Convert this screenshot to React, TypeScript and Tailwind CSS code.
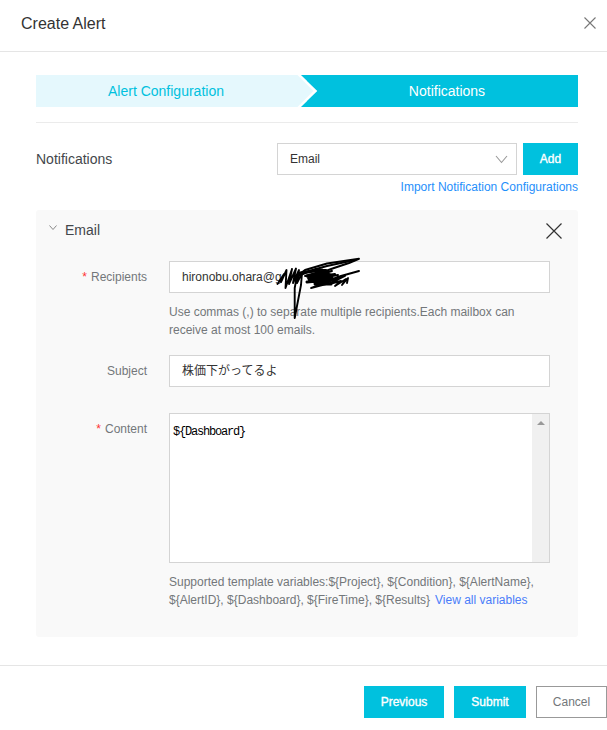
import type { ReactNode } from "react";

function Cross({ size, color, width }: { size: number; color: string; width: number }) {
  return (
    <svg width={size} height={size} viewBox={`0 0 ${size} ${size}`} className="block" stroke={color} strokeWidth={width}>
      <path d={`M0.5 0.5L${size - 0.5} ${size - 0.5}M${size - 0.5} 0.5L0.5 ${size - 0.5}`} />
    </svg>
  );
}

function Steps() {
  return (
    <div className="relative flex h-8 text-sm leading-8">
      <div className="w-[271px] bg-[#e5f8fd] pr-[11px] text-center text-[#00c1de]">Alert Configuration</div>
      <div className="flex-1 bg-[#00c1de] pl-[9px] text-center text-white">Notifications</div>
      <svg className="absolute left-[250px] top-0" width="34" height="32" viewBox="0 0 34 32">
        <path d="M10 0H15L31.500 16L15 32H10Z" fill="#fff" />
        <path d="M15 0H34V32H15L31.500 16Z" fill="#00c1de" />
        <path d="M0 0H11.500L27.500 16L11.500 32H0Z" fill="#e5f8fd" />
      </svg>
    </div>
  );
}

function Field({ label, required, children }: { label: string; required?: boolean; children: ReactNode }) {
  return (
    <div className="flex">
      <div className="w-[111px] shrink-0 text-right text-xs leading-8 text-[#73777a]">
        {required && <span className="mr-1 text-[#ff3333]">*</span>}
        {label}
      </div>
      <div className="ml-[22px] w-[381px]">{children}</div>
    </div>
  );
}

function Scribble() {
  return (
    <svg
      className="absolute left-[105px] top-[-6px]"
      width="90"
      height="66"
      viewBox="0 0 90 66"
      fill="none"
      stroke="#000"
      strokeWidth="1.9"
      strokeLinejoin="round"
      strokeLinecap="round"
    >
      <path d="M2.500 28L9 18L6 26L11.500 14L10.500 32L17 13L14 28L21 12.500L18 27L24 14L22 27L27 17L26 29L19.700 62L19.700 32L22 20L30 14L52 7.500L84 2.800L74 7L59 12L45 17L33 22" />
      <path d="M23 18L52 10L80 4M24 20L40 13L51 14L30 20L57 15L36 21L60 18L34 24L63 19M84 15L66 20L50 26L36 32L55 27L70 20L54 28L66 25L60 30L71 23L67 29L73 22L72 27" />
      <path d="M25 17L47 14L53 17L32 20L55 19L34 23L57 22L32 26L62 23L40 28L56 28" strokeWidth="3" />
    </svg>
  );
}

export default function App() {
  return (
    <div className="flex h-[730px] w-[607px] flex-col overflow-hidden bg-white font-['Liberation_Sans','Noto_Sans_CJK_JP',sans-serif] text-[#333]">
      <header className="flex h-[52px] shrink-0 items-center justify-between border-b border-[#e5e5e5] pb-[5px] pl-[21px] pr-[11px]">
        <h1 className="pt-px text-base leading-6">Create Alert</h1>
        <button aria-label="Close"><Cross size={12} color="#777" width={1.1} /></button>
      </header>

      <main className="h-[613px] shrink-0 pl-9 pr-[29px] pt-[23px]">
        <Steps />
        <div className="mt-[15px] h-px bg-[#ebebeb]" />

        <div className="mt-5 flex h-8 items-center">
          <span className="flex-1 text-sm text-[#43474b]">Notifications</span>
          <div className="flex h-8 w-60 items-center justify-between border border-[#d4d4d4] pl-3 pr-2 text-xs">
            <span>Email</span>
            <svg width="13" height="9" viewBox="0 0 13 9" fill="none" stroke="#999" strokeWidth="1.1">
              <path d="M1 1L6.500 7.500L12 1" />
            </svg>
          </div>
          <button className="ml-1.5 h-8 w-[55px] bg-[#00c1de] text-xs text-white [-webkit-text-stroke:0.35px_white]">Add</button>
        </div>
        <a className="block pt-[3px] text-right text-xs leading-[18px] text-[#1f8ffb]">Import Notification Configurations</a>

        <section className="mt-[14px] h-[427px] rounded-[3px] bg-[#f9f9f9]">
          <div className="flex h-[51px] items-start justify-between pl-[13px] pr-4 pt-[13px]">
            <div className="flex items-start gap-2 text-sm leading-[14px] text-[#43474b]">
              <svg className="mt-0.5" width="8" height="6" viewBox="0 0 8 6" fill="none" stroke="#888">
                <path d="M0.500 0.500L4 4.500L7.500 0.500" />
              </svg>
              <span>Email</span>
            </div>
            <button aria-label="Remove"><Cross size={16} color="#333" width={1.2} /></button>
          </div>

          <Field label="Recipients" required>
            <div className="relative h-8 border border-[#d4d4d4] bg-white pl-3 text-xs leading-[30px]">
              hironobu.ohara@g
              <Scribble />
            </div>
            <p className="mt-[10px] text-xs leading-[18px] text-[#73777a]">
              Use commas (,) to separate multiple recipients.Each mailbox can<br />receive at most 100 emails.
            </p>
          </Field>
          <div className="mt-4">
            <Field label="Subject">
              <div className="h-8 border border-[#d4d4d4] bg-white pl-3 text-xs leading-[30px]">株価下がってるよ</div>
            </Field>
          </div>
          <div className="mt-[26px]">
            <Field label="Content" required>
              <div className="flex h-[150px] justify-between border border-[#d4d4d4] bg-white">
                <span className="pl-[3px] pt-[9px] font-['Liberation_Mono',monospace] text-xs leading-[18px] tracking-[-1.2px] text-black">{"${Dashboard}"}</span>
                <div className="flex w-[17px] justify-center bg-[#f0f0f0] pt-[7px]">
                  <svg width="8" height="4" viewBox="0 0 8 4" fill="#999"><path d="M4 0L8 4H0Z" /></svg>
                </div>
              </div>
              <p className="mt-[10px] whitespace-nowrap text-xs leading-[18px] text-[#73777a]">
                {"Supported template variables:${Project}, ${Condition}, ${AlertName},"}<br />
                {"${AlertID}, ${Dashboard}, ${FireTime}, ${Results}"}
                <a className="ml-[5px] text-[#4a7dfa]">View all variables</a>
              </p>
            </Field>
          </div>
        </section>
      </main>

      <footer className="flex h-[65px] shrink-0 justify-end gap-[10px] border-t border-[#e5e5e5] pt-5 text-xs">
        <button className="h-8 w-20 bg-[#00c1de] text-white [-webkit-text-stroke:0.35px_white]">Previous</button>
        <button className="h-8 w-[72px] bg-[#00c1de] text-white [-webkit-text-stroke:0.35px_white]">Submit</button>
        <button className="h-8 w-[71px] border border-[#999] text-[#73777a]">Cancel</button>
      </footer>
    </div>
  );
}
